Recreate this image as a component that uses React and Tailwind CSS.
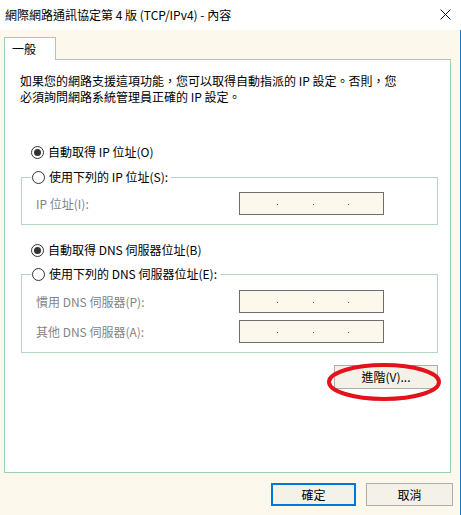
import React from 'react';

const font = { fontFamily: '"Noto Sans CJK TC", "Noto Sans", sans-serif' };

const Radio = ({ checked }) => (
  <span className="w-[13px] h-[13px] rounded-full border border-[#333333] bg-white flex items-center justify-center shrink-0">
    {checked && <span className="w-[7px] h-[7px] rounded-full bg-[#333333]" />}
  </span>
);

const IpBox = () => (
  <div className="w-[145px] h-[23px] border border-[#6d6d6d] bg-[#fcf8ec] relative shrink-0">
    <span className="absolute left-[37px] top-[11px] w-px h-px bg-[#555]" />
    <span className="absolute left-[73px] top-[11px] w-px h-px bg-[#555]" />
    <span className="absolute left-[108px] top-[11px] w-px h-px bg-[#555]" />
  </div>
);

const RadioRow = ({ checked, label, legend }) => (
  <div className={`flex items-center h-[16px] gap-[4px] ${legend ? '-mt-[9px] ml-[9px] bg-white w-fit pl-px pr-[3px]' : 'ml-[10px]'}`}>
    <Radio checked={checked} />
    <span className="text-[12px] leading-[16px] text-black">{label}</span>
  </div>
);

const Field = ({ label, className = '' }) => (
  <div className={`flex items-center h-[23px] ${className}`}>
    <span className="w-[217px] pl-[14px] text-[12px] text-[#838383]">{label}</span>
    <IpBox />
  </div>
);

export default function App() {
  return (
    <div className="w-[461px] h-[515px] bg-[#fcf8ec] flex flex-col" style={font}>
      {/* title bar */}
      <div className="h-[30px] bg-white flex items-center pl-[5px] pr-[10px] shrink-0">
        <span className="text-[12px] text-black flex-1">網際網路通訊協定第 4 版 (TCP/IPv4) - 內容</span>
        <svg width="11" height="11" viewBox="0 0 11 11" className="mb-[1px]">
          <path d="M0.5 0.5 L10.5 10.5 M10.5 0.5 L0.5 10.5" stroke="#111" strokeWidth="1" />
        </svg>
      </div>

      <div className="flex-1 border-r border-[#1979ca] pt-[7px] relative">
        {/* tab */}
        <div className="ml-[4px] w-[52px] h-[23px] -mb-px relative z-10 bg-white border border-b-0 border-[#9ccfb3] pl-[7px] flex items-center">
          <span className="text-[12px] text-black">一般</span>
        </div>

        {/* panel */}
        <div className="ml-[4px] w-[447px] h-[414px] bg-white border border-[#9ccfb3]">
          <div className="flex flex-col pt-[13px]">
            <span className="ml-[15px] w-fit text-[12px] leading-[16px] text-black whitespace-nowrap">
              如果您的網路支援這項功能，您可以取得自動指派的 IP 設定。否則，您
            </span>
            <span className="ml-[15px] w-fit text-[12px] leading-[16px] text-black whitespace-nowrap">
              必須詢問網路系統管理員正確的 IP 設定。
            </span>
          </div>

          <div className="ml-[16px] w-[417px]">
            <div className="mt-[39px]">
              <RadioRow checked label="自動取得 IP 位址(O)" />
            </div>
            <div className="mt-[17px] border border-[#b5d6c2]">
              <RadioRow legend label="使用下列的 IP 位址(S):" />
              <Field label="IP 位址(I):" className="mt-[7px] mb-[9px]" />
            </div>

            <div className="mt-[17px]">
              <RadioRow checked label="自動取得 DNS 伺服器位址(B)" />
            </div>
            <div className="mt-[16px] border border-[#b5d6c2]">
              <RadioRow legend label="使用下列的 DNS 伺服器位址(E):" />
              <Field label="慣用 DNS 伺服器(P):" className="mt-[8px]" />
              <Field label="其他 DNS 伺服器(A):" className="mt-[7px] mb-[9px]" />
            </div>

            <div className="flex justify-end mt-[12px] relative">
              <button className="w-[104px] h-[24px] border border-[#adadad] bg-[#f4f1e8] text-[12px] text-black flex items-center justify-center">
                進階(V)...
              </button>
              <svg className="absolute right-[-4px] top-[-3px]" width="116" height="40" viewBox="0 0 116 40">
                <ellipse cx="58" cy="20" rx="55" ry="17" fill="none" stroke="#e5121b" strokeWidth="4" />
              </svg>
            </div>
          </div>
        </div>

        {/* dialog buttons */}
        <div className="flex justify-end gap-[10px] mt-[10px] pr-[7px]">
          <button className="w-[85px] h-[23px] border-2 border-[#0078d7] bg-[#f4f1e8] text-[12px] text-black flex items-center justify-center">
            確定
          </button>
          <button className="w-[87px] h-[23px] border border-[#adadad] bg-[#f4f1e8] text-[12px] text-black flex items-center justify-center">
            取消
          </button>
        </div>
      </div>
    </div>
  );
}
